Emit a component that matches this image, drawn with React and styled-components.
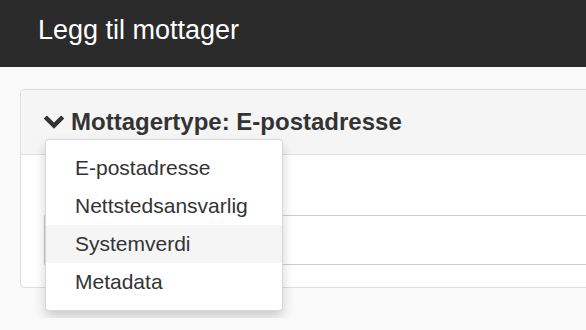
import React from "react";
import styled, { createGlobalStyle } from "styled-components";

const Global = createGlobalStyle`
  html, body { margin: 0; padding: 0; }
  body {
    background: #f9f9f9;
    font-family: "Liberation Sans", Arial, sans-serif;
    color: #333;
    overflow: hidden;
    width: 586px;
    height: 330px;
  }
`;

const TopBar = styled.header`
  height: 67px;
  background: #2b2b2b;
  color: #fff;
  display: flex;
  align-items: center;
  padding-left: 38px;
  font-size: 27px;
  padding-bottom: 6px;
  box-sizing: border-box;
`;

const Main = styled.main`
  padding: 22px 0 30px 20px;
  overflow: hidden;
`;

const Panel = styled.section`
  position: relative;
  margin-right: -20px;
  border: 1px solid #dddddd;
  border-radius: 4px;
  background: #fff;
`;

const PanelHeader = styled.div`
  height: 64px;
  background: #f5f5f5;
  border-bottom: 1px solid #dddddd;
  border-radius: 4px 4px 0 0;
  display: flex;
  align-items: center;
  gap: 7px;
  padding-left: 23px;
  font-size: 24px;
  font-weight: bold;
  color: #333;
`;

const PanelBody = styled.div`
  padding: 60px 0 22px 23px;
`;

const Field = styled.div`
  height: 48px;
  border: 1px solid #cccccc;
  border-right: none;
`;

const Menu = styled.ul`
  position: absolute;
  left: 24px;
  top: 49px;
  width: 236px;
  margin: 0;
  padding: 9px 0;
  list-style: none;
  background: #fff;
  border: 1px solid rgba(0, 0, 0, 0.15);
  border-radius: 4px;
  box-shadow: 0 6px 12px rgba(0, 0, 0, 0.175);
  z-index: 2;
`;

const Item = styled.li`
  height: 38px;
  display: flex;
  align-items: center;
  padding-left: 29px;
  font-size: 21px;
  color: #333;
  background: ${(p) => (p.$active ? "#f5f5f5" : "transparent")};
`;

const Chevron = () => (
  <svg width="20" height="14" viewBox="90 520 1612 1050" fill="#333">
    <path d="M1683 808l-742 741q-19 19-45 19t-45-19l-742-741q-19-19-19-45.5t19-45.5l166-165q19-19 45-19t45 19l531 531 531-531q19-19 45-19t45 19l166 165q19 19 19 45.5t-19 45.5z" />
  </svg>
);

const items = ["E-postadresse", "Nettstedsansvarlig", "Systemverdi", "Metadata"];

export default function App() {
  return (
    <>
      <Global />
      <TopBar>Legg til mottager</TopBar>
      <Main>
        <Panel>
          <PanelHeader>
            <Chevron />
            <span>Mottagertype: E-postadresse</span>
          </PanelHeader>
          <PanelBody>
            <Field />
          </PanelBody>
          <Menu>
            {items.map((t) => (
              <Item key={t} $active={t === "Systemverdi"}>
                {t}
              </Item>
            ))}
          </Menu>
        </Panel>
      </Main>
    </>
  );
}
